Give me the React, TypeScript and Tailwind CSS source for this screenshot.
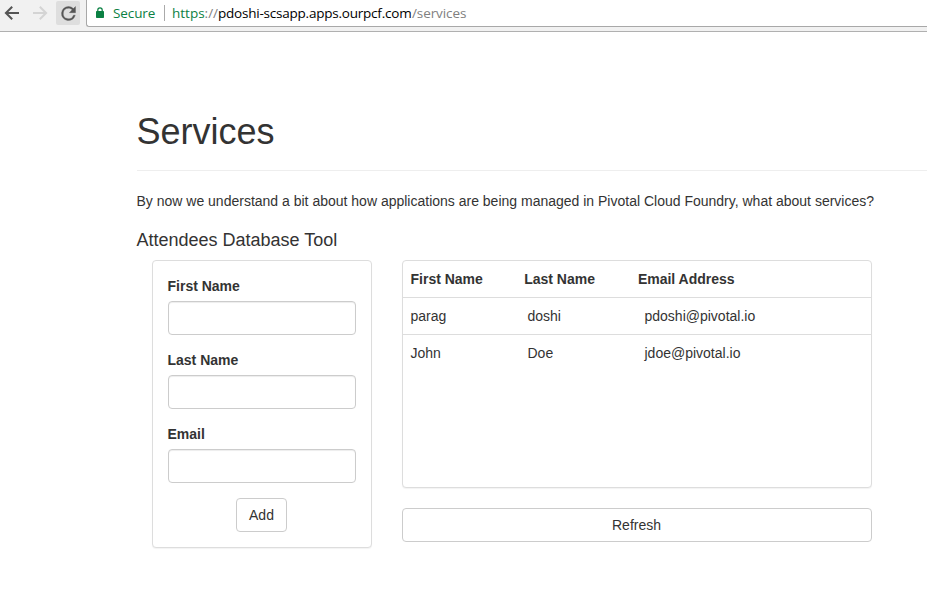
import type { ReactNode } from "react";

function Toolbar() {
  return (
    <header className="flex h-8 overflow-hidden border-b border-[#b0b0b0] bg-[#f1f1f1]">
      <div className="flex w-[86px] shrink-0 items-start pt-px">
        <svg className="mt-[2px] ml-[2px] h-5 w-5" viewBox="0 0 20 20" fill="none" stroke="#555" strokeWidth="2">
          <path d="M17 10H4M10.2 3.7 3.9 10l6.3 6.3" />
        </svg>
        <svg className="mt-[2px] ml-[8px] h-5 w-5" viewBox="0 0 20 20" fill="none" stroke="#d4d4d4" strokeWidth="2">
          <path d="M3 10h13M9.8 3.7l6.3 6.3-6.3 6.3" />
        </svg>
        <div className="ml-[6px] flex h-6 w-6 items-center justify-center rounded-[2px] bg-[#dedede]">
          <svg className="h-[21px] w-[21px]" viewBox="0 0 24 24" fill="#555" stroke="#555" strokeWidth="0.4">
            <path d="M17.65 6.35A7.96 7.96 0 0 0 12 4a8 8 0 1 0 7.73 10h-2.08A6 6 0 1 1 12 6c1.66 0 3.14.69 4.22 1.78L13 11h7V4z" />
          </svg>
        </div>
      </div>
      <div className="-mt-1 flex h-[31px] flex-1 rounded-bl-[3px] border-b border-l border-[#a8a8a8] bg-white pt-1 font-['Open_Sans',sans-serif] text-[13.5px] leading-[26px] whitespace-nowrap">
        <svg className="mt-[7px] ml-2 h-3 w-[10px]" viewBox="0 0 10 12">
          <rect x="1" y="4" width="8" height="7" rx="0.7" fill="#0b8043" />
          <path d="M2.8 5V3a2.2 2.2 0 0 1 4.4 0v2" fill="none" stroke="#0b8043" strokeWidth="1.2" />
        </svg>
        <span className="ml-[8px] w-[51px] tracking-[-0.1px] text-[#0b8043]">Secure</span>
        <span className="mt-[5px] h-4 w-px bg-[#aaa]" />
        <span className="ml-[7px] flex">
          <span className="w-[46px]"><span className="text-[#0b8043]">https</span><span className="text-[#808080]">://</span></span>
          <span className="w-[194px] tracking-[-0.22px] text-black">pdoshi-scsapp.apps.ourpcf.com</span>
          <span className="tracking-[-0.1px] text-[#808080]">/services</span>
        </span>
      </div>
    </header>
  );
}

function Field({ label }: { label: string }) {
  return (
    <label className="mb-[15px] block font-bold">
      <span className="mb-[5px] -ml-[0.5px] block">{label}</span>
      <input className="block h-[34px] w-full rounded border border-[#ccc] bg-white px-3 shadow-[inset_0_1px_1px_rgba(0,0,0,0.075)] outline-none" />
    </label>
  );
}

function Panel({ className, children }: { className: string; children: ReactNode }) {
  return (
    <div className={`rounded border border-[#ddd] bg-white shadow-[0_1px_1px_rgba(0,0,0,0.05)] ${className}`}>
      {children}
    </div>
  );
}

const attendees = [
  { first: "parag", last: "doshi", email: "pdoshi@pivotal.io" },
  { first: "John", last: "Doe", email: "jdoe@pivotal.io" },
];

export default function App() {
  return (
    <div className="h-[609px] overflow-hidden bg-white font-['Liberation_Sans',Arial,sans-serif] text-sm leading-5 text-[#333]">
      <Toolbar />
      <main className="pt-20 pl-[136.5px]">
        <h1 className="h-[59px] border-b border-[#eee] text-[36px] leading-[40px]">Services</h1>
        <p className="mt-5">
          By now we understand a bit about how applications are being managed in Pivotal Cloud Foundry, what about services?
        </p>
        <h4 className="mt-[19px] text-lg leading-5">Attendees Database Tool</h4>
        <div className="mt-[10px] ml-[15.5px] flex items-start gap-[30px]">
          <Panel className="h-72 w-[220px] p-[15px]">
            <Field label="First Name" />
            <Field label="Last Name" />
            <Field label="Email" />
            <button className="ml-[68px] block h-[34px] w-[51px] rounded border border-[#ccc] bg-white">Add</button>
          </Panel>
          <div className="w-[470px]">
            <Panel className="h-[228px]">
              <div className="flex h-9 items-center pl-[7.5px] font-bold">
                <span className="w-[113.7px]">First Name</span>
                <span className="w-[113.7px]">Last Name</span>
                <span>Email Address</span>
              </div>
              {attendees.map((a) => (
                <div key={a.email} className="flex h-[37px] items-center border-t border-[#ddd] pl-[7.5px]">
                  <span className="w-[117px]">{a.first}</span>
                  <span className="w-[117px]">{a.last}</span>
                  <span>{a.email}</span>
                </div>
              ))}
            </Panel>
            <button className="mt-5 block h-[34px] w-full rounded border border-[#ccc] bg-white pr-px">Refresh</button>
          </div>
        </div>
      </main>
    </div>
  );
}
